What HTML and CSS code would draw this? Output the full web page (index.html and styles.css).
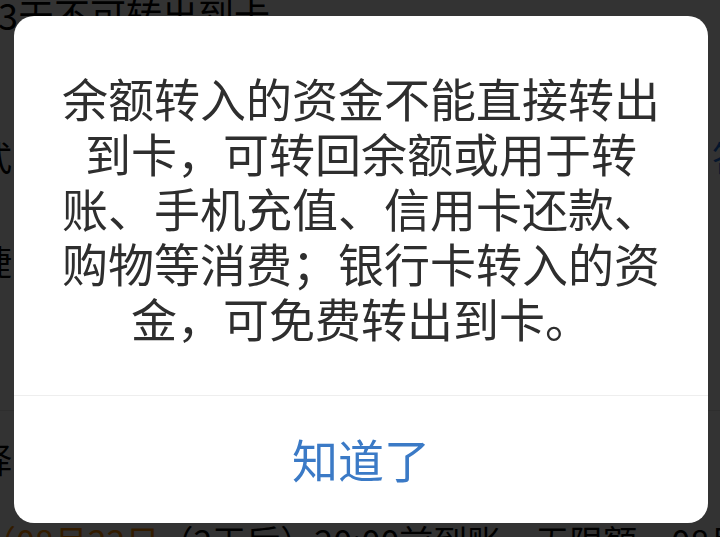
FILE: index.html
```html
<!DOCTYPE html>
<html lang="zh-CN">
<head>
<meta charset="utf-8">
<title>提示</title>
<link rel="stylesheet" href="styles.css">
</head>
<body>
<div class="page">
  <div class="bg-row row-a"><span class="bg-left-flush">3天不可转出到卡</span></div>
  <div class="bg-row row-b"><span class="bg-left">方式</span><span class="bg-right link">答</span></div>
  <div class="bg-row row-c"><span class="bg-left">快捷</span></div>
  <div class="bg-row row-d"><span class="bg-left orange">-2</span><span class="bg-right">=</span></div>
  <div class="bg-divider"></div>
  <div class="bg-row row-e"><span class="bg-left">选择</span></div>
  <div class="bg-row row-f"><span class="bg-left-bottom"><span class="orange">（08月22日</span>（2天后）20:00前到账，无限额，08月</span></div>
</div>

<div class="overlay">
  <div class="dialog">
    <div class="dialog-body">
      <p class="dialog-text">余额转入的资金不能直接转出<br>到卡，可转回余额或用于转<br>账、手机充值、信用卡还款、<br>购物等消费；银行卡转入的资<br>金，可免费转出到卡。</p>
    </div>
    <div class="dialog-footer">
      <button class="dialog-btn" type="button">知道了</button>
    </div>
  </div>
</div>
</body>
</html>
```
FILE: styles.css
```css
* { box-sizing: border-box; }
html, body {
  margin: 0;
  padding: 0;
  width: 720px;
  height: 537px;
  overflow: hidden;
}
body {
  background: #ffffff;
  font-family: "Noto Sans CJK SC", "Noto Sans", sans-serif;
  color: #000;
}

.page {
  width: 720px;
  height: 537px;
  overflow: hidden;
}
.bg-row {
  display: flex;
  justify-content: space-between;
  align-items: center;
  font-size: 34px;
  white-space: nowrap;
  color: #000;
}
.row-a { height: 28px; line-height: 28px; font-size: 36px; }
.row-b { height: 50px; margin-top: 103px; }
.row-c { height: 50px; margin-top: 54px; }
.row-d { height: 46px; margin-top: 5px; }
.bg-divider {
  height: 1px;
  background: #e6e6e6;
  margin-top: 74px;
}
.row-e { height: 50px; margin-top: 22px; }
.row-f { height: 50px; margin-top: 32px; }

.bg-left-flush { margin-left: -2px; }
.bg-left-bottom { margin-left: -18px; }
.bg-left { margin-left: -56px; }
.bg-right { margin-right: -26px; }
.orange { color: #ff8c00; }
.link { color: #1e6fd9; }

.overlay {
  position: fixed;
  inset: 0;
  background: rgba(0, 0, 0, 0.8);
  display: flex;
  align-items: flex-start;
  justify-content: flex-start;
  padding: 16px 0 0 14px;
}
.dialog {
  width: 694px;
  height: 507px;
  background: #ffffff;
  border-radius: 20px;
  display: flex;
  flex-direction: column;
  overflow: hidden;
}
.dialog-body {
  height: 379px;
  padding: 54px 20px 0;
}
.dialog-text {
  margin: 0;
  font-size: 46px;
  line-height: 55px;
  text-align: center;
  color: #2e2e2e;
}
.dialog-footer {
  flex: 1;
  border-top: 1px solid #eeeeee;
  display: flex;
}
.dialog-btn {
  flex: 1;
  border: 0;
  background: transparent;
  padding: 0 0 4px;
  margin: 0;
  font-family: "Noto Sans CJK SC", "Noto Sans", sans-serif;
  font-size: 46px;
  color: #3b7ac6;
  cursor: pointer;
}
```
